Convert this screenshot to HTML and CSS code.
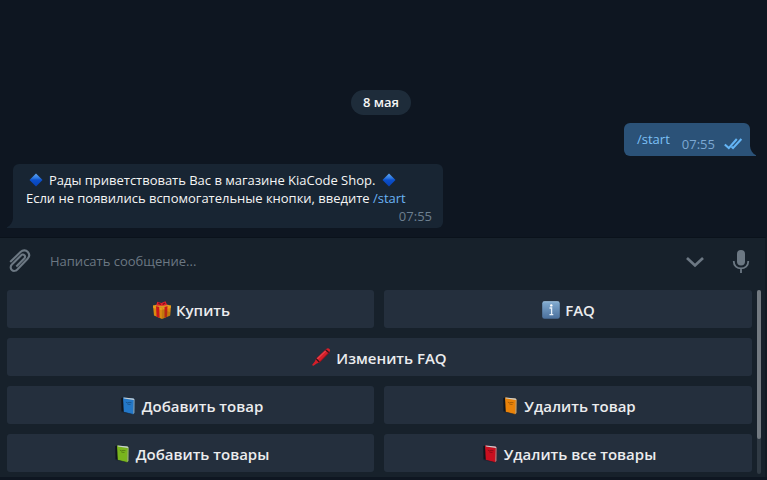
FILE: index.html
```
<!DOCTYPE html>
<html lang="ru">
<head>
<meta charset="utf-8">
<title>KiaCode Shop</title>
<link rel="stylesheet" href="styles.css">
</head>
<body>
<svg class="defs" width="0" height="0" aria-hidden="true">
  <defs>
    <linearGradient id="gem" x1="0" y1="0" x2="0" y2="1"><stop offset="0" stop-color="#62a8f4"/><stop offset=".35" stop-color="#2c76e0"/><stop offset=".5" stop-color="#0b50cc"/><stop offset="1" stop-color="#0740b4"/></linearGradient>
    <linearGradient id="info" x1="0" y1="0" x2="0" y2="1"><stop offset="0" stop-color="#83acd1"/><stop offset="1" stop-color="#4a6f9c"/></linearGradient>
    <symbol id="diamond" viewBox="0 0 14 14"><path d="M7 .5 13.500 7 7 13.500.5 7z" fill="url(#gem)"/></symbol>
    <symbol id="book" viewBox="0 0 18 18">
      <path d="M2.200 1 4.500.4 6.500 15 2.500 14.300z" fill="#10151d"/>
      <path d="M4 .6 14.500 1.600 15.500 2.600 15.300 16 14 17.400 4.800 15z" fill="currentColor"/>
      <path d="m4.500.5 10 1 1 1-.7.5-9.800-1.500z" fill="#c9d0d2"/>
      <path d="M14.600 3 15.600 2.600 15.400 16l-1.200 1z" fill="#a5a9a2" opacity=".75"/>
      <path d="m2.600 14.200 11.500 2.900v.7L2.600 15z" fill="#14202d" opacity=".7"/>
      <path d="m6.800 5.100 1.700.8 1.500-.5 2.500.3M8.500 7.200l3 .3" fill="none" stroke="#000" stroke-opacity=".35" stroke-width=".8"/>
    </symbol>
  </defs>
</svg>
<div class="app">
  <main class="chat">
    <div class="date">8 мая</div>
    <div class="message out">
      <span class="command">/start</span>
      <span class="time">07:55</span>
      <svg class="checks" width="19" height="12" viewBox="0 0 19 12"><path d="m.8 6.500 4 3.600L12.800 1M7.600 8.800l1.400 1.300L17.400 1" fill="none" stroke="#64b5f6" stroke-width="2.100"/></svg>
      <svg class="tail" width="7" height="10" viewBox="0 0 7 10"><path d="M0 0C.3 4 2.500 7.600 6 9.300V10H0z" fill="#2b5278"/></svg>
    </div>
    <div class="message in">
      <svg class="tail" width="7" height="10" viewBox="0 0 7 10"><path d="M7 0C6.700 4 4.500 7.600 1 9.300V10H7z" fill="#182533"/></svg>
      <div class="line greeting"><svg class="gem" width="14" height="14"><use href="#diamond"/></svg><span class="text">Рады приветствовать Вас в магазине KiaCode Shop.</span><svg class="gem" width="14" height="14"><use href="#diamond"/></svg></div>
      <div class="line body">Если не появились вспомогательные кнопки, введите <span class="command">/start</span></div>
      <div class="line time">07:55</div>
    </div>
  </main>
  <section class="panel">
    <div class="composer">
      <svg class="clip" width="22" height="24" viewBox="0 0 22 24"><path d="M1.200 13 11.500 3C14 .700 17 1 18.800 3s1.900 4.500-.2 6.700L8.300 20.500c-1.600 1.600-4 1.800-5.500.4s-1.500-3.700.1-5.300l9.100-9.200c1.100-1.100 2.500-1.100 3.400-.2s.8 2.200-.2 3.300l-7.900 8" fill="none" stroke="#6c7883" stroke-width="2.100"/></svg>
      <span class="placeholder">Написать сообщение...</span>
      <svg class="chevron" width="20" height="12" viewBox="0 0 20 12"><path d="m2 2 8 7.500L18 2" fill="none" stroke="#6c7883" stroke-width="2.700"/></svg>
      <svg class="mic" width="18" height="24" viewBox="0 0 18 24"><rect x="5" y="0" width="8" height="15.500" rx="4" fill="#6c7883"/><path d="M1.800 11v.8C1.800 15.700 5 18.400 9 18.400s7.200-2.700 7.200-6.600V11M9 18.400V23" fill="none" stroke="#6c7883" stroke-width="1.800"/></svg>
    </div>
    <div class="keyboard">
      <div class="keys">
        <div class="key gift"><svg class="icon" width="18" height="18" viewBox="0 0 18 18"><path d="m0 4.500 8.500 2L18 4.500l-.8 10L9 18 1 14.500z" fill="#d98a10"/><path d="m0 4.500 9-2 9 2-9 2.500z" fill="#d99724"/><path d="M0 4.500 9 7v2.200L.3 7zM18 4.500 9 7v2.200L17.700 7z" fill="#e89c1b"/><path d="m3 5.200 3.200.8.4 11-3-1.200zM11.500 6l3-.8-.5 10.500-2.500 1.100z" fill="#c7161c"/><path d="M8.800 7v11L17 14.500l.3-3z" fill="#87500a" opacity=".3"/><path d="M8.500 4.800 3.200 4.500 4.300.8l4 1.200 4.200-1.700 1.700 3.600-4 .9z" fill="#df202d"/><path d="m5.300 2 2.500 1.400M12 2 9.700 3.600" stroke="#801019" stroke-width="1.200"/></svg><span>Купить</span></div>
        <div class="key"><svg class="icon" width="18" height="18" viewBox="0 0 18 18"><rect x=".2" y=".2" width="17.600" height="17.600" rx="2.300" fill="url(#info)"/><path d="M1 1.500Q1.500.8 2.500.8h13q1 0 1.500.7" fill="none" stroke="#a8c7e0" stroke-width=".7"/><path d="M7.500 7h2.100v6.500M7.500 13.700h3.800" fill="none" stroke="#e8f1fa" stroke-width="1.300"/><circle cx="9.300" cy="4.400" r="1.200" fill="#fff"/></svg><span>FAQ</span></div>
        <div class="key wide"><svg class="icon" width="19" height="18" viewBox="0 0 19 18"><path d="M4.100 10.500 14.500.8q1-.9 2.200-.4.900.4 1.400 1.500.2 1-.6 1.900L7.400 14.600l-2.700.8-3.200 2.400-1-.2-.3-.9 2.600-3.300z" fill="#d51e29"/><path d="M5 11.300 14.700 2" stroke="#f5565b" stroke-width=".9"/><path d="m4.100 10.600 3.300 3.700M13.600 1.800l3.400 3" stroke="#3a1018" stroke-width="1.300"/><path d="m7.300 14.400 10-10" stroke="#8e101a" stroke-width="1"/></svg><span>Изменить FAQ</span></div>
        <div class="key"><svg class="icon blue" width="18" height="18"><use href="#book"/></svg><span>Добавить товар</span></div>
        <div class="key"><svg class="icon orange" width="18" height="18"><use href="#book"/></svg><span>Удалить товар</span></div>
        <div class="key"><svg class="icon green" width="18" height="18"><use href="#book"/></svg><span>Добавить товары</span></div>
        <div class="key"><svg class="icon red" width="18" height="18"><use href="#book"/></svg><span>Удалить все товары</span></div>
      </div>
      <div class="scrollbar"><div class="thumb"></div></div>
    </div>
  </section>
</div>
</body>
</html>
```
FILE: styles.css
```
* { box-sizing: border-box; }
body { margin: 0; background: #0e1621; color: #f5f5f5; font: 13px/18px "Open Sans", sans-serif; overflow: hidden; }
svg { display: block; flex: none; }
.defs { position: absolute; }
.app { width: 767px; height: 480px; display: flex; flex-direction: column; }
.chat { height: 237px; padding: 90px 17px 0 13px; display: flex; flex-direction: column; }
.date { align-self: center; height: 25px; padding: 0 12px; border-radius: 13px; background: #1e2c3a; font-weight: 600; line-height: 25px; margin-right: 1px; }
.message { position: relative; white-space: nowrap; }
.out { align-self: flex-end; width: 126px; height: 33px; margin-top: 8px; padding: 7px 8px 0 13px; display: flex; background: #2b5278; border-radius: 6px 6px 0 6px; }
.out .command { color: #7dc1f7; }
.out .time { margin: 5px 0 0 12px; color: #7da8d3; }
.checks { margin: 8px 0 0 9px; }
.out .tail { position: absolute; bottom: 0; right: -7px; }
.in { width: 430px; height: 64px; margin-top: 8px; padding: 7px 11px 0 13px; background: #182533; border-radius: 6px 6px 6px 0; }
.in .tail { position: absolute; bottom: 0; left: -7px; }
.line { height: 18px; }
.greeting { display: flex; padding-left: 3px; }
.greeting .text { margin: 0 7px 0 6px; letter-spacing: -0.015px; }
.body { letter-spacing: -0.015px; }
.gem { margin-top: 2px; }
.command { color: #6ab3f3; }
.in .time { color: #6d7f8f; text-align: right; }
.panel { height: 240px; border-top: 1px solid #0a121b; border-right: 2px solid #121b24; background: #17212b; }
.composer { height: 52px; display: flex; padding-left: 9px; }
.clip { margin-top: 11px; }
.placeholder { margin: 14px auto 0 19px; color: #6c7883; }
.chevron { margin: 18px 27px 0 0; }
.mic { margin: 12px 15px 0 0; }
.keyboard { display: flex; gap: 5px; padding-left: 7px; }
.keys { width: 745px; display: grid; grid-template-columns: 367px 368px; grid-auto-rows: 38px; gap: 10px; }
.key { display: flex; align-items: center; justify-content: center; gap: 5px; padding-left: 1px; background: #242f3d; border-radius: 3px; color: #ebecee; font-size: 15px; font-weight: 600; line-height: 20px; }
.key span, .key .icon { position: relative; top: 1px; }
.gift { padding-left: 2px; }
.wide { grid-column: span 2; padding-left: 0; }
.wide .icon { top: 0; }
.blue { color: #2478c8; }
.orange { color: #e98209; }
.green { color: #79b51d; }
.red { color: #c90f1f; }
.scrollbar { width: 4px; height: 184px; border-radius: 2px; background: #303a44; }
.thumb { height: 149px; border-radius: 2px; background: #737a81; }
```
